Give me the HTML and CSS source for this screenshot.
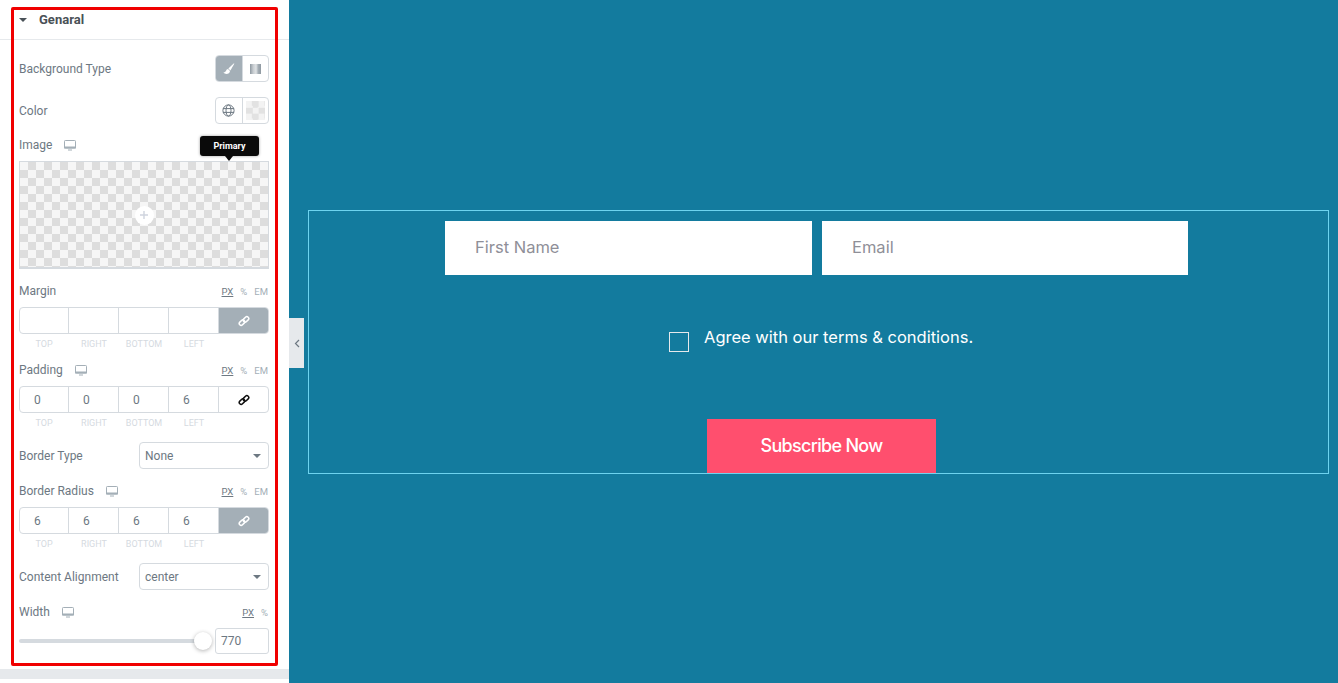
FILE: index.html
```html
<!doctype html>
<html lang="en">
  <head>
    <meta charset="UTF-8" />
    <title>Form background settings</title>
    <link rel="stylesheet" href="styles.css">
  </head>
  <body>
    <svg class="defs" width="0" height="0" aria-hidden="true">
      <symbol id="monitor" viewBox="0 0 12 11">
        <rect x="0.5" y="0.5" width="11" height="7.5" rx="0.8" fill="none" stroke="currentColor" />
        <rect x="0" y="6.5" width="12" height="2" fill="currentColor" />
        <rect x="4" y="9.5" width="4" height="1" fill="currentColor" />
      </symbol>
      <symbol id="link" viewBox="0 0 12 12">
        <g fill="none" stroke="currentColor" stroke-width="1.5">
          <rect x="0.9" y="5.7" width="6.2" height="3.8" rx="1.9" transform="rotate(-45 4 7.6)" />
          <rect x="4.9" y="2.5" width="6.2" height="3.8" rx="1.9" transform="rotate(-45 8 4.4)" />
        </g>
      </symbol>
    </svg>

    <div class="page">
      <aside class="panel">
        <div class="section-head">
          <span class="caret caret-dark"></span>
          <span class="section-title">Genaral</span>
        </div>

        <div class="controls">
          <div class="row row-type">
            <span class="label">Background Type</span>
            <div class="toggle">
              <span class="toggle-btn is-active">
                <svg width="12" height="12" viewBox="0 0 12 12">
                  <path d="M11.4 0.4 L10.6 0.4 L5.4 5.6 L7.4 7.6 Z" fill="#fff" />
                  <path d="M5 6 C2.8 6.2 3.6 9.2 0.4 9.6 C2 11.6 6.8 11.4 7 8 Z" fill="#fff" />
                </svg>
              </span>
              <span class="toggle-btn">
                <span class="gradient-icon"></span>
              </span>
            </div>
          </div>

          <div class="row row-color">
            <span class="label">Color</span>
            <div class="toggle">
              <span class="toggle-btn">
                <svg width="13" height="13" viewBox="0 0 13 13" fill="none" stroke="#6d7882">
                  <circle cx="6.5" cy="6.5" r="5.6" />
                  <ellipse cx="6.5" cy="6.5" rx="2.5" ry="5.6" />
                  <path d="M1 4.6 H12 M1 8.4 H12" />
                </svg>
              </span>
              <span class="toggle-btn">
                <span class="swatch"></span>
              </span>
            </div>
          </div>

          <div class="row row-image">
            <span class="label">Image</span>
            <svg class="device" width="12" height="11"><use href="#monitor" /></svg>
          </div>
          <div class="image-box">
            <span class="image-add">
              <svg width="10" height="10" viewBox="0 0 10 10">
                <path d="M5 1 V9 M1 5 H9" stroke="#cfd4de" stroke-width="1.4" />
              </svg>
            </span>
          </div>

          <div class="row row-unit row-margin">
            <span class="label">Margin</span>
            <div class="units"><u>PX</u><span>%</span><span>EM</span></div>
          </div>
          <div class="dims">
            <span class="dim"></span>
            <span class="dim"></span>
            <span class="dim"></span>
            <span class="dim"></span>
            <span class="dim dim-link is-active"><svg width="12" height="12"><use href="#link" /></svg></span>
          </div>
          <div class="dim-labels"><span>TOP</span><span>RIGHT</span><span>BOTTOM</span><span>LEFT</span></div>

          <div class="row row-unit row-padding">
            <span class="label">Padding</span>
            <svg class="device" width="12" height="11"><use href="#monitor" /></svg>
            <div class="units"><u>PX</u><span>%</span><span>EM</span></div>
          </div>
          <div class="dims">
            <span class="dim">0</span>
            <span class="dim">0</span>
            <span class="dim">0</span>
            <span class="dim">6</span>
            <span class="dim dim-link"><svg width="12" height="12"><use href="#link" /></svg></span>
          </div>
          <div class="dim-labels"><span>TOP</span><span>RIGHT</span><span>BOTTOM</span><span>LEFT</span></div>

          <div class="row row-select row-border-type">
            <span class="label">Border Type</span>
            <div class="select"><span>None</span><span class="caret"></span></div>
          </div>

          <div class="row row-unit row-radius">
            <span class="label">Border Radius</span>
            <svg class="device" width="12" height="11"><use href="#monitor" /></svg>
            <div class="units"><u>PX</u><span>%</span><span>EM</span></div>
          </div>
          <div class="dims">
            <span class="dim">6</span>
            <span class="dim">6</span>
            <span class="dim">6</span>
            <span class="dim">6</span>
            <span class="dim dim-link is-active"><svg width="12" height="12"><use href="#link" /></svg></span>
          </div>
          <div class="dim-labels"><span>TOP</span><span>RIGHT</span><span>BOTTOM</span><span>LEFT</span></div>

          <div class="row row-select row-align">
            <span class="label">Content Alignment</span>
            <div class="select"><span>center</span><span class="caret"></span></div>
          </div>

          <div class="row row-unit row-width">
            <span class="label">Width</span>
            <svg class="device" width="12" height="11"><use href="#monitor" /></svg>
            <div class="units"><u>PX</u><span>%</span></div>
          </div>
          <div class="slider-row">
            <div class="slider"><span class="slider-thumb"></span></div>
            <div class="slider-value">770</div>
          </div>
        </div>

        <div class="panel-band"></div>

        <div class="tooltip">Primary</div>
        <div class="highlight"></div>
      </aside>

      <main class="stage">
        <button class="collapse" type="button" aria-label="Collapse">
          <svg width="6" height="9" viewBox="0 0 6 9" fill="none" stroke="#6d7882" stroke-width="1.2">
            <path d="M5 1 L1.5 4.5 L5 8" />
          </svg>
        </button>

        <form class="subscribe">
          <div class="fields">
            <input class="field field-name" type="text" placeholder="First Name" />
            <input class="field field-email" type="text" placeholder="Email" />
          </div>
          <label class="agree">
            <span class="agree-box"></span>
            <span>Agree with our terms &amp; conditions.</span>
          </label>
          <button class="submit" type="button">Subscribe Now</button>
        </form>
      </main>
    </div>
  </body>
</html>
```

FILE: styles.css
```css
* {
  box-sizing: border-box;
}

html,
body {
  margin: 0;
  height: 100%;
  overflow: hidden;
}

body {
  font-family: "Roboto", sans-serif;
  font-size: 12px;
  color: #6d7882;
}

.defs {
  display: block;
  height: 0;
}

.page {
  display: flex;
  height: 683px;
}

/* left panel */
.panel {
  position: relative;
  width: 289px;
  flex: none;
  background: #fff;
}

.section-head {
  display: flex;
  align-items: center;
  height: 40px;
  padding-left: 19px;
  border-bottom: 1px solid #e6e9ec;
}

.section-title {
  margin-left: 12px;
  font-size: 13px;
  font-weight: 700;
  color: #495157;
}

.controls {
  padding: 0 20px 0 19px;
}

.row {
  display: flex;
  align-items: center;
}

.label {
  color: #6d7882;
}

.device {
  margin-left: 12px;
  color: #a4afb7;
}

.row-type,
.row-color {
  justify-content: space-between;
  height: 27px;
}

.row-type {
  margin-top: 15px;
}

.row-color {
  margin-top: 15px;
}

.toggle {
  display: flex;
  width: 54px;
  height: 27px;
  border: 1px solid #d5dadf;
  border-radius: 4px;
  overflow: hidden;
}

.toggle-btn {
  display: flex;
  align-items: center;
  justify-content: center;
  flex: 1;
}

.toggle-btn + .toggle-btn {
  border-left: 1px solid #d5dadf;
}

.toggle-btn.is-active {
  background: #a4afb7;
}

.gradient-icon {
  width: 11px;
  height: 10px;
  background: linear-gradient(90deg, #8f99a1, #c9ced2 30%, #e0e3e5 55%, #a4adb4 75%, #8f99a1);
}

.swatch {
  width: 19px;
  height: 19px;
  background: repeating-conic-gradient(#e2e2e2 0 25%, #f3f3f3 0 50%) 0 0 / 12.67px 12.67px;
}

.row-image {
  height: 18px;
  margin-top: 12px;
}

.image-box {
  display: flex;
  align-items: center;
  justify-content: center;
  height: 108px;
  margin-top: 7px;
  border: 1px solid #d5dadf;
  border-bottom-width: 2px;
  background: repeating-conic-gradient(#dddddd 0 25%, #f6f6f6 0 50%) 0 0 / 16px 16px;
}

.image-add {
  display: flex;
  align-items: center;
  justify-content: center;
  width: 19px;
  height: 19px;
  margin-top: 1px;
  border-radius: 50%;
  background: #fff;
}

.row-unit {
  height: 14px;
}

.row-margin {
  margin-top: 15px;
}

.row-padding {
  margin-top: 11px;
}

.row-radius {
  margin-top: 15px;
}

.row-width {
  margin-top: 15px;
}

.units {
  display: flex;
  gap: 7px;
  margin-left: auto;
  padding: 1px 1px 0 0;
  font-size: 9.5px;
  color: #a4afb7;
}

.units u {
  color: #6d7882;
}

.dims {
  display: grid;
  grid-template-columns: 49px 50px 50px 50px 1fr;
  height: 27px;
  margin-top: 9px;
  border: 1px solid #d5dadf;
  border-radius: 4px;
  overflow: hidden;
}

.dim {
  display: flex;
  align-items: center;
  padding-left: 14px;
  border-right: 1px solid #d5dadf;
  color: #6d7882;
}

.dim-link {
  justify-content: center;
  padding-left: 0;
  border-right: 0;
  color: #111;
}

.dim-link.is-active {
  margin: -1px -1px -1px 0;
  background: #a4afb7;
  color: #fff;
}

.dim-labels {
  display: flex;
  align-items: center;
  height: 18px;
  padding: 1px 50px 0 0;
  font-size: 9px;
  color: #d5dadf;
}

.dim-labels span {
  flex: 1;
  text-align: center;
}

.row-select {
  justify-content: space-between;
  height: 27px;
}

.row-border-type {
  margin-top: 11px;
}

.row-align {
  margin-top: 11px;
}

.select {
  display: flex;
  align-items: center;
  justify-content: space-between;
  width: 130px;
  height: 27px;
  padding: 0 7px 0 5px;
  border: 1px solid #d5dadf;
  border-radius: 4px;
  color: #6d7882;
}

.caret {
  width: 0;
  height: 0;
  border-left: 4px solid transparent;
  border-right: 4px solid transparent;
  border-top: 4px solid #6d7882;
}

.caret-dark {
  border-top-color: #495157;
}

.slider-row {
  display: flex;
  align-items: center;
  justify-content: space-between;
  height: 26px;
  margin-top: 9px;
}

.slider {
  position: relative;
  width: 184px;
  height: 4px;
  border-radius: 2px;
  background: #d5dadf;
}

.slider-thumb {
  position: absolute;
  top: -7px;
  right: -9px;
  width: 18px;
  height: 18px;
  border-radius: 50%;
  background: #fff;
  box-shadow: 0 1px 4px rgba(0, 0, 0, 0.3);
}

.slider-value {
  display: flex;
  align-items: center;
  width: 54px;
  height: 26px;
  padding-left: 5px;
  border: 1px solid #d5dadf;
  border-radius: 3px;
}

.panel-band {
  position: absolute;
  left: 0;
  right: 0;
  top: 669px;
  height: 10px;
  background: #e6e9ec;
}

.tooltip {
  position: absolute;
  left: 200px;
  top: 136px;
  width: 59px;
  height: 20px;
  border-radius: 3px;
  background: #0a0a0a;
  box-shadow: 0 0 3px rgba(0, 0, 0, 0.4);
  color: #fff;
  font-size: 9px;
  font-weight: 700;
  line-height: 20px;
  text-align: center;
}

.tooltip::after {
  content: "";
  position: absolute;
  left: 25px;
  bottom: -5px;
  border-left: 4px solid transparent;
  border-right: 4px solid transparent;
  border-top: 5px solid #0a0a0a;
}

.highlight {
  position: absolute;
  left: 11px;
  top: 7px;
  width: 267px;
  height: 659px;
  border: 3px solid #f00000;
  border-radius: 2px;
  pointer-events: none;
}

/* preview area */
.stage {
  position: relative;
  flex: 1;
  padding: 210px 0 0 19px;
  background: #137b9e;
}

.collapse {
  position: absolute;
  left: 0;
  top: 318px;
  width: 15px;
  height: 50px;
  padding: 0;
  border: 0;
  background: #e6e9ec;
}

.subscribe {
  display: flex;
  flex-direction: column;
  width: 1021px;
  height: 264px;
  padding: 10px 0 0 136px;
  border: 1px solid #6ed3ef;
}

.fields {
  display: flex;
  gap: 10px;
}

.field {
  height: 54px;
  padding: 0 30px 2px;
  border: 0;
  border-radius: 0;
  background: #fff;
  font-family: "Inter", sans-serif;
  font-size: 16.5px;
}

.field-name {
  width: 367px;
}

.field-email {
  width: 366px;
}

.field::placeholder {
  color: #8f8f98;
  opacity: 1;
}

.agree {
  display: flex;
  align-items: center;
  gap: 15px;
  height: 26px;
  margin: 49px 0 0 224px;
  color: #fff;
  font-family: "Inter", sans-serif;
  font-size: 16.5px;
}

.agree-box {
  width: 20px;
  height: 20px;
  margin-top: 9px;
  border: 1px solid #e6e9ec;
}

.submit {
  width: 229px;
  height: 54px;
  margin: 69px 0 0 262px;
  padding: 0 0 2px;
  border: 0;
  background: #ff4f6e;
  color: #fff;
  font-family: "Inter", sans-serif;
  font-size: 18px;
  font-weight: 500;
  letter-spacing: -0.7px;
}
```
